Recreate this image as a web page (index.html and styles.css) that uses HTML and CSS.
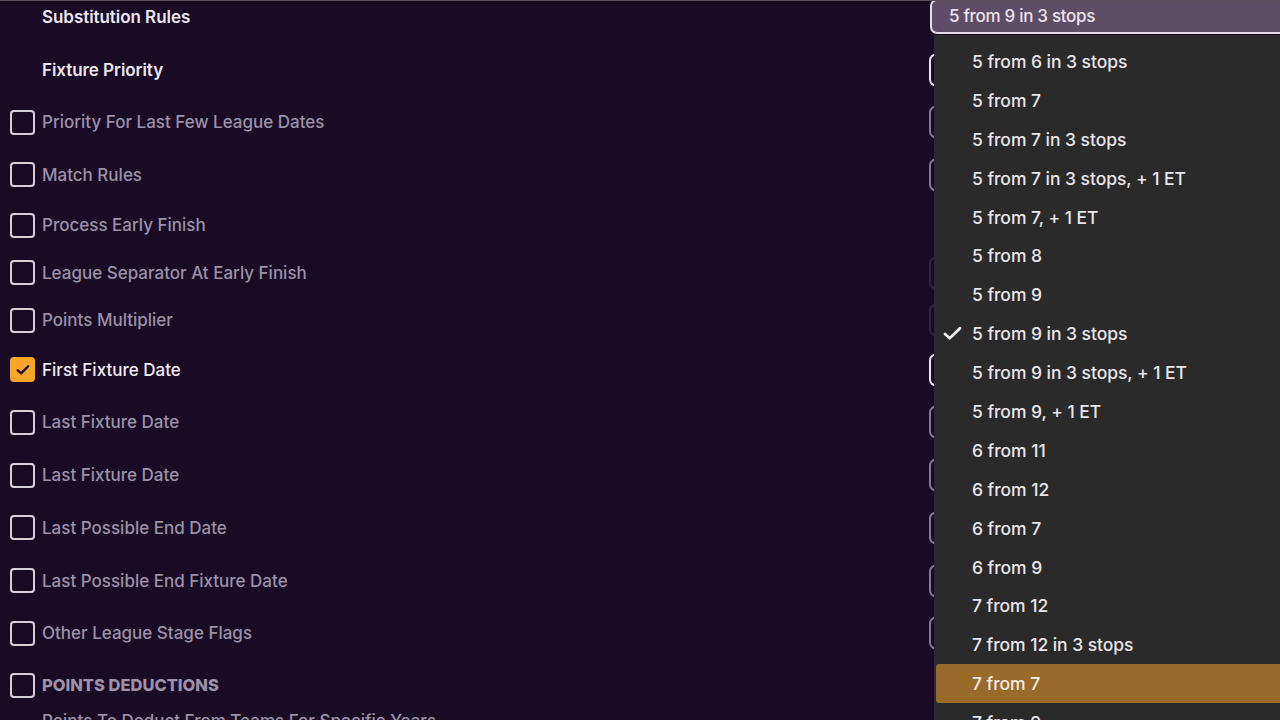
FILE: index.html
```html
<!DOCTYPE html>
<html>
<head>
<meta charset="utf-8">
<link rel="stylesheet" href="styles.css">
</head>
<body>
<div class="page">
  <div class="topline"></div>
  <div class="rows">
    <div class="row h52 head">
      <span class="nobox"></span><span class="label">Substitution Rules</span>
      <div class="field active"><span>5 from 9 in 3 stops</span></div>
    </div>
    <div class="row h53 head">
      <span class="nobox"></span><span class="label">Fixture Priority</span>
      <div class="field on"></div>
    </div>
    <div class="row h52">
      <span class="box"></span><span class="label">Priority For Last Few League Dates</span>
      <div class="field off"></div>
    </div>
    <div class="row h53">
      <span class="box"></span><span class="label">Match Rules</span>
      <div class="field off"></div>
    </div>
    <div class="row h48">
      <span class="box"></span><span class="label">Process Early Finish</span>
    </div>
    <div class="row h47">
      <span class="box"></span><span class="label">League Separator At Early Finish</span>
      <div class="field faint"></div>
    </div>
    <div class="row h48">
      <span class="box"></span><span class="label">Points Multiplier</span>
      <div class="field faint"></div>
    </div>
    <div class="row h51 checked">
      <span class="box tick"><svg viewBox="0 0 24 24" width="18" height="18"><path d="M5 12.5 L9.5 16.5 L19 7" fill="none" stroke="#1a0b26" stroke-width="3.2" stroke-linecap="round" stroke-linejoin="round"/></svg></span><span class="label">First Fixture Date</span>
      <div class="field on"></div>
    </div>
    <div class="row h54">
      <span class="box"></span><span class="label">Last Fixture Date</span>
      <div class="field off"></div>
    </div>
    <div class="row h52">
      <span class="box"></span><span class="label">Last Fixture Date</span>
      <div class="field off"></div>
    </div>
    <div class="row h53">
      <span class="box"></span><span class="label">Last Possible End Date</span>
      <div class="field off"></div>
    </div>
    <div class="row h53">
      <span class="box"></span><span class="label">Last Possible End Fixture Date</span>
      <div class="field off"></div>
    </div>
    <div class="row h52">
      <span class="box"></span><span class="label">Other League Stage Flags</span>
      <div class="field off"></div>
    </div>
    <div class="row h52">
      <span class="box"></span><span class="label caps">POINTS DEDUCTIONS</span>
    </div>
    <div class="row sub">
      <span class="nobox"></span><span class="label">Points To Deduct From Teams For Specific Years</span>
    </div>
  </div>

  <ul class="menu">
    <li>5 from 6 in 3 stops</li>
    <li>5 from 7</li>
    <li>5 from 7 in 3 stops</li>
    <li>5 from 7 in 3 stops, + 1 ET</li>
    <li>5 from 7, + 1 ET</li>
    <li>5 from 8</li>
    <li>5 from 9</li>
    <li class="selected"><svg class="check" viewBox="0 0 20 16" width="19" height="15"><path d="M2 8.5 L7 13 L18 2.5" fill="none" stroke="#f2f2f2" stroke-width="3" stroke-linecap="round" stroke-linejoin="round"/></svg>5 from 9 in 3 stops</li>
    <li>5 from 9 in 3 stops, + 1 ET</li>
    <li>5 from 9, + 1 ET</li>
    <li>6 from 11</li>
    <li>6 from 12</li>
    <li>6 from 7</li>
    <li>6 from 9</li>
    <li>7 from 12</li>
    <li>7 from 12 in 3 stops</li>
    <li class="hover">7 from 7</li>
    <li>7 from 9</li>
  </ul>
</div>
</body>
</html>
```

FILE: styles.css
```css
* { box-sizing: border-box; }
html, body {
  margin: 0;
  padding: 0;
  width: 1280px;
  height: 720px;
  overflow: hidden;
  background: #190b26;
  font-family: "Inter", "Liberation Sans", sans-serif;
}
.page {
  position: relative;
  width: 1280px;
  height: 720px;
  overflow: hidden;
}
.topline {
  position: absolute;
  left: 0; top: 0;
  width: 1280px;
  height: 1px;
  background: #5a5060;
  z-index: 2;
}
.rows {
  margin-top: -9px;
  display: flex;
  flex-direction: column;
}
.row {
  display: flex;
  align-items: center;
  position: relative;
  padding-left: 10px;
}
.h47 { height: 47px; }
.h48 { height: 48px; }
.h51 { height: 51px; }
.h52 { height: 52px; }
.h53 { height: 53px; }
.h54 { height: 54px; }
.row.sub { height: 30px; align-items: flex-start; padding-top: 0; }

.box, .nobox {
  width: 25px;
  height: 25px;
  flex: 0 0 25px;
  margin-right: 7px;
}
.box {
  border: 2px solid #d9d0de;
  border-radius: 4px;
}
.box.tick {
  background: #f7a628;
  border-color: #f7a628;
  display: flex;
  align-items: center;
  justify-content: center;
}
.label {
  font-size: 17px;
  font-weight: 500;
  color: #9b91a8;
  letter-spacing: 0;
  white-space: nowrap;
}
.head .label { color: #ece6f0; font-weight: 600; letter-spacing: -0.05px; }
.checked .label { color: #f1ecf4; }
.label.caps {
  font-size: 16.5px;
  font-weight: 800;
  letter-spacing: 0;
}
.sub .label { color: #9b91a8; }

.field {
  position: absolute;
  left: 929px;
  top: 50%;
  transform: translateY(-50%);
  width: 400px;
  height: 33px;
  border: 2px solid #8a7e96;
  border-radius: 7px;
}
.field.on { border-color: #e8e2ec; }
.field.off { border-color: #857a92; }
.field.faint { border-color: #34224a; }
.field.active {
  top: 8px;
  transform: none;
  left: 930px;
  height: 35px;
  border-color: #e2dce6;
  background: #5e4d66;
  display: flex;
  align-items: center;
  padding-left: 17px;
  padding-bottom: 1px;
}
.field.active span {
  font-size: 17px;
  font-weight: 500;
  color: #ebe4ee;
  letter-spacing: -0.3px;
}

.menu {
  position: absolute;
  left: 934px;
  top: 35px;
  width: 346px;
  height: 700px;
  margin: 0;
  padding: 7px 0 0 0;
  list-style: none;
  background: #2b2a2b;
}
.menu li {
  position: relative;
  height: 38.9px;
  display: flex;
  align-items: center;
  padding-left: 38px;
  font-size: 17.5px;
  font-weight: 500;
  color: #e8e6e8;
  letter-spacing: -0.05px;
  white-space: nowrap;
}
.menu li.hover {
  background: #9a6a2b;
  margin-left: 2px;
  padding-left: 36px;
  border-radius: 3px 0 0 3px;
  color: #f3ece2;
}
.menu .check {
  position: absolute;
  left: 9px;
  top: 12px;
}
```
